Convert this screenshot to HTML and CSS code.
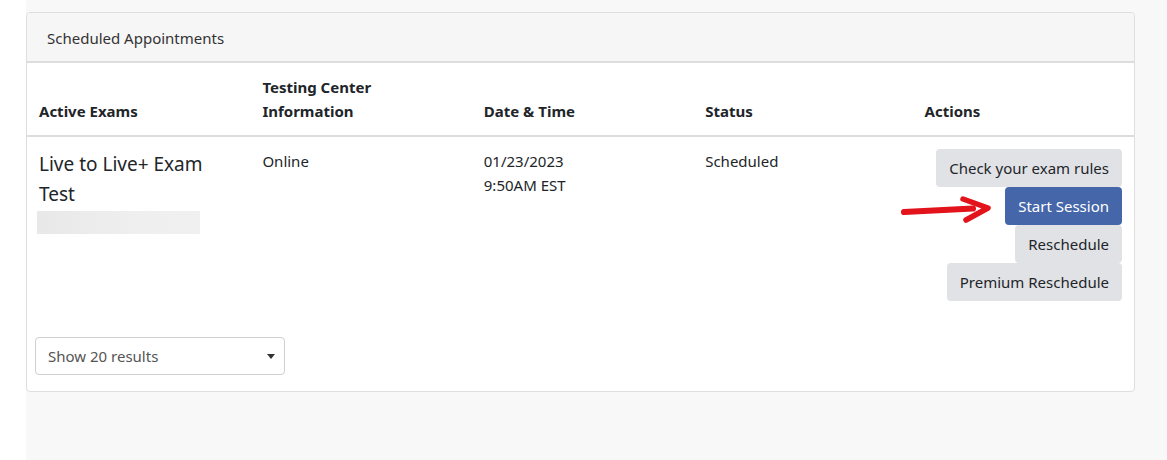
FILE: index.html
```html
<!DOCTYPE html>
<html lang="en">
<head>
    <meta charset="UTF-8">
    <meta name="viewport" content="width=device-width, initial-scale=1.0">
    <title>Scheduled Appointments</title>
    <link rel="stylesheet" href="styles.css">
</head>
<body>
    <div class="page">
        <aside class="side"></aside>
        <main class="main">
            <div class="card">
                <div class="card-header">Scheduled Appointments</div>
                <table class="appts">
                    <thead>
                        <tr>
                            <th>Active Exams</th>
                            <th>Testing Center<br>Information</th>
                            <th>Date &amp; Time</th>
                            <th>Status</th>
                            <th>Actions</th>
                        </tr>
                    </thead>
                    <tbody>
                        <tr>
                            <td>
                                <div class="exam-name">Live to Live+ Exam Test</div>
                                <div class="redacted"></div>
                            </td>
                            <td>Online</td>
                            <td>01/23/2023<br>9:50AM EST</td>
                            <td>Scheduled</td>
                            <td class="actions">
                                <svg class="arrow" width="92" height="30" viewBox="0 0 92 30">
                                    <path d="M3 17 L72 13.5" stroke="#e3131b" stroke-width="6" stroke-linecap="round" fill="none"/>
                                    <path d="M62 4 L87 13 L65 25" stroke="#e3131b" stroke-width="5.5" stroke-linecap="round" stroke-linejoin="round" fill="none"/>
                                </svg>
                                <button class="btn">Check your exam rules</button>
                                <button class="btn btn-primary">Start Session</button>
                                <button class="btn">Reschedule</button>
                                <button class="btn">Premium Reschedule</button>
                            </td>
                        </tr>
                    </tbody>
                </table>
                <div class="card-footer">
                    <div class="select-wrap">
                        <select class="page-size">
                            <option>Show 20 results</option>
                            <option>Show 50 results</option>
                        </select>
                        <span class="caret"></span>
                    </div>
                </div>
            </div>
        </main>
    </div>
</body>
</html>
```

FILE: styles.css
```css
body {
    margin: 0;
    background: #f8f8f9;
    font-family: "Segoe UI", "Noto Sans", sans-serif;
    color: #212529;
    font-size: 15px;
}
.page { display: flex; min-height: 460px; }
.side { width: 26px; background: #fff; flex-shrink: 0; }
.main { flex: 1; padding: 12px 32px 0 0; }

.card {
    background: #fff;
    border: 1px solid #dedede;
    border-radius: 4px;
}
.card-header {
    background: #f6f6f6;
    height: 48px;
    line-height: 50px;
    padding: 0 20px;
    font-size: 15px;
    color: #333;
    border-bottom: 2px solid #dddddd;
    border-radius: 4px 4px 0 0;
}

.appts {
    width: 100%;
    border-collapse: collapse;
    table-layout: fixed;
}
.appts th {
    text-align: left;
    vertical-align: bottom;
    font-weight: bold;
    line-height: 24px;
    padding: 12px;
    border-bottom: 2px solid #dddddd;
}
.appts th:nth-child(2),
.appts th:nth-child(3),
.appts th:nth-child(4) { padding-left: 14px; }
.appts td {
    vertical-align: top;
    line-height: 24px;
    padding: 12px;
}
.appts td:nth-child(2),
.appts td:nth-child(3),
.appts td:nth-child(4) { padding-left: 14px; }
.exam-name {
    font-size: 19px;
    line-height: 30px;
}
.redacted {
    width: 163px;
    height: 23px;
    margin: 2px 0 0 -2px;
    background: linear-gradient(90deg, #e8e8e8, #efefef 60%, #f0f0f0);
}

.actions {
    position: relative;
    text-align: right;
    padding-right: 11px;
}
.btn {
    display: block;
    margin-left: auto;
    font: inherit;
    line-height: 24px;
    padding: 7px 13px;
    border: 0;
    border-radius: 4px;
    background: #e1e2e6;
    color: #212529;
}
.btn-primary { background: #4566a9; color: #fff; }
.arrow {
    position: absolute;
    left: -12px;
    top: 58px;
}

.card-footer { padding: 24px 8px 16px; }
.select-wrap {
    position: relative;
    width: 250px;
}
.page-size {
    appearance: none;
    width: 100%;
    height: 38px;
    padding: 0 12px;
    font: inherit;
    color: #555;
    background: #fff;
    border: 1px solid #cfcfcf;
    border-radius: 4px;
}
.caret {
    position: absolute;
    right: 10px;
    top: 17px;
    border-left: 4px solid transparent;
    border-right: 4px solid transparent;
    border-top: 5px solid #333;
}
```
